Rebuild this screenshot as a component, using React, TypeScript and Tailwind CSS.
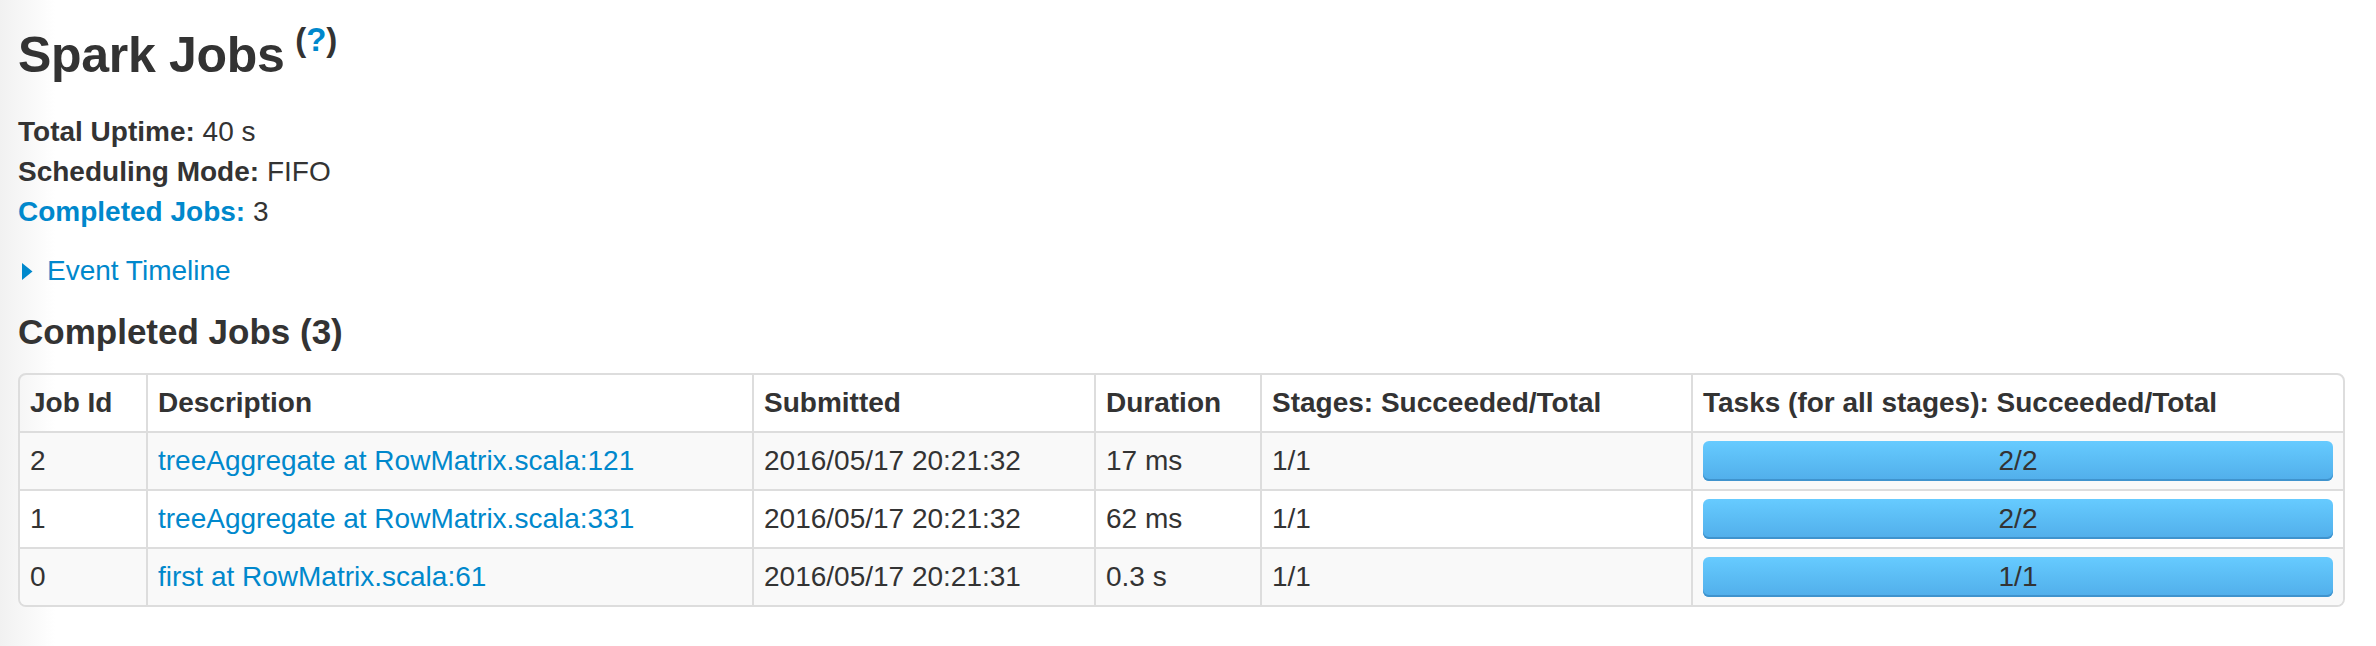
import React from "react";

const rows = [
  { id: "2", desc: "treeAggregate at RowMatrix.scala:121", sub: "2016/05/17 20:21:32", dur: "17 ms", stages: "1/1", tasks: "2/2" },
  { id: "1", desc: "treeAggregate at RowMatrix.scala:331", sub: "2016/05/17 20:21:32", dur: "62 ms", stages: "1/1", tasks: "2/2" },
  { id: "0", desc: "first at RowMatrix.scala:61", sub: "2016/05/17 20:21:31", dur: "0.3 s", stages: "1/1", tasks: "1/1" },
];

const headers = [
  "Job Id",
  "Description",
  "Submitted",
  "Duration",
  "Stages: Succeeded/Total",
  "Tasks (for all stages): Succeeded/Total",
];

export default function App() {
  return (
    <div
      className="min-h-[646px] w-full bg-[linear-gradient(to_right,#f1f1f1_0px,#f8f8f8_28px,#ffffff_55px)] pl-[18px] text-[#333333]"
      style={{ fontFamily: '"Liberation Sans", Arial, Helvetica, sans-serif' }}
    >
      <div className="pt-[30px] text-[50px] font-bold leading-[50px] tracking-[-0.3px]">
        Spark Jobs{" "}
        <span className="relative -top-[21px] -ml-[3px] text-[33px] leading-none tracking-normal">
          (<a className="text-[#0088cc]">?</a>)
        </span>
      </div>

      <ul className="mt-[32px] mb-[19px] text-[28px] leading-[40px]">
        <li>
          <strong>Total Uptime:</strong> 40 s
        </li>
        <li>
          <strong>Scheduling Mode:</strong> FIFO
        </li>
        <li>
          <a className="font-bold text-[#0088cc]">Completed Jobs:</a> 3
        </li>
      </ul>

      <div className="flex items-center text-[28px] leading-[40px] text-[#0088cc]">
        <svg width="11" height="17" viewBox="0 0 11 17" className="ml-[4px] mr-[14px]">
          <polygon points="0,0 10.5,8.5 0,17" fill="#0088cc" />
        </svg>
        <span>Event Timeline</span>
      </div>

      <h4 className="mt-[21px] text-[35px] font-bold leading-[40px]">Completed Jobs (3)</h4>

      <table className="mt-[21px] w-[2327px] table-fixed border-separate border-spacing-0 rounded-[8px] border-2 border-[#dddddd] text-[28px] leading-[40px]">
        <colgroup>
          <col className="w-[126px]" />
          <col className="w-[606px]" />
          <col className="w-[342px]" />
          <col className="w-[166px]" />
          <col className="w-[431px]" />
          <col className="w-[652px]" />
        </colgroup>
        <thead>
          <tr>
            {headers.map((h, i) => (
              <th
                key={h}
                className={
                  "px-[10px] py-[8px] text-left align-top font-bold " +
                  (i > 0 ? "border-l-2 border-[#dddddd]" : "")
                }
              >
                {h}
              </th>
            ))}
          </tr>
        </thead>
        <tbody>
          {rows.map((r, ri) => {
            const striped = ri % 2 === 0;
            const last = ri === rows.length - 1;
            const base =
              "border-t-2 border-[#dddddd] px-[10px] py-[8px] align-top " +
              (striped ? "bg-[#f9f9f9] " : "bg-white ");
            return (
              <tr key={r.id}>
                <td className={base + (last ? "rounded-bl-[6px]" : "")}>{r.id}</td>
                <td className={base + "border-l-2"}>
                  <a className="text-[#0088cc]">{r.desc}</a>
                </td>
                <td className={base + "border-l-2"}>{r.sub}</td>
                <td className={base + "border-l-2"}>{r.dur}</td>
                <td className={base + "border-l-2"}>{r.stages}</td>
                <td className={base + "border-l-2 " + (last ? "rounded-br-[6px]" : "")}>
                  <div className="h-[40px] rounded-[6px] bg-[linear-gradient(to_bottom,#66cbff,#51aeea)] text-center leading-[40px] text-[#333333] shadow-[inset_0_-2px_0_#3f93cd]">
                    {r.tasks}
                  </div>
                </td>
              </tr>
            );
          })}
        </tbody>
      </table>
    </div>
  );
}
